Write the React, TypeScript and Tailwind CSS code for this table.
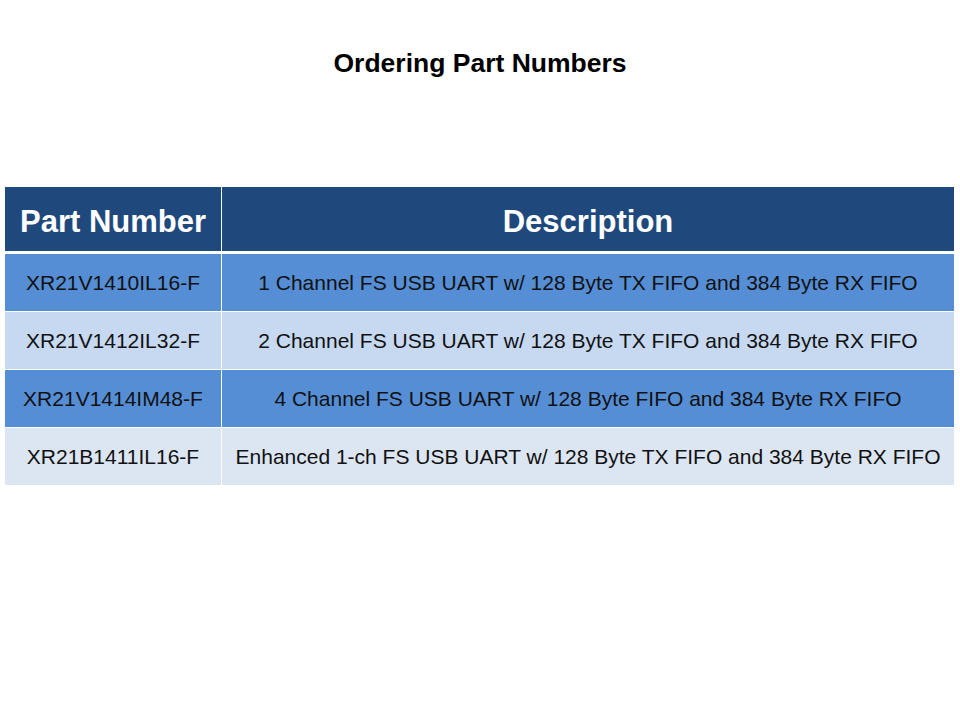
const ROWS = [
  {
    part: 'XR21V1410IL16-F',
    desc: '1 Channel FS USB UART w/ 128 Byte TX FIFO and 384 Byte RX FIFO',
    bg: 'bg-[#558ed5]',
  },
  {
    part: 'XR21V1412IL32-F',
    desc: '2 Channel FS USB UART w/ 128 Byte TX FIFO and 384 Byte RX FIFO',
    bg: 'bg-[#c6d9f1]',
  },
  {
    part: 'XR21V1414IM48-F',
    desc: '4 Channel FS USB UART w/ 128 Byte FIFO and 384 Byte RX FIFO',
    bg: 'bg-[#558ed5]',
  },
  {
    part: 'XR21B1411IL16-F',
    desc: 'Enhanced 1-ch FS USB UART w/ 128 Byte TX FIFO and 384 Byte RX FIFO',
    bg: 'bg-[#dce6f2]',
  },
];

export default function App() {
  return (
    <div className="w-[960px] h-[720px] bg-white font-['Liberation_Sans',Arial,sans-serif] text-black">
      <h1 className="pt-[48px] text-center text-[26.5px] font-bold leading-[30px]">
        Ordering Part Numbers
      </h1>

      <div className="mt-[109px] ml-[5px] w-[949px] flex flex-col">
        <div className="grid grid-cols-[216px_1fr] gap-x-px h-[64px]">
          <div className="bg-[#1f497d] text-white font-bold text-[31px] flex items-center justify-center pt-[6px]">
            Part Number
          </div>
          <div className="bg-[#1f497d] text-white font-bold text-[31px] flex items-center justify-center pt-[6px]">
            Description
          </div>
        </div>
        <div className="h-[3px]" />
        {ROWS.map((r, i) => (
          <div
            key={r.part}
            className={`grid grid-cols-[216px_1fr] gap-x-px h-[57px] text-[#111] text-[21px] ${i > 0 ? 'mt-px' : ''}`}
          >
            <div className={`${r.bg} flex items-center justify-center`}>
              {r.part}
            </div>
            <div className={`${r.bg} flex items-center justify-center`}>
              {r.desc}
            </div>
          </div>
        ))}
      </div>
    </div>
  );
}
